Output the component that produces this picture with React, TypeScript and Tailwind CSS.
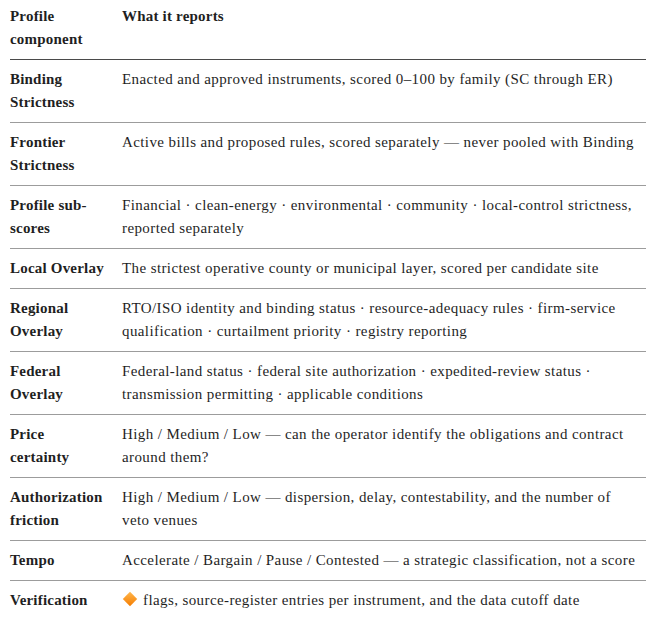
import React from "react"

type Row = {
    label: string
    text: React.ReactNode
}

function Diamond() {
    return (
        <svg width="16" height="16" viewBox="0 0 16 16" className="inline-block align-[-2px] mr-[5px]">
            <defs>
                <linearGradient id="dg" x1="0" y1="0" x2="0" y2="1">
                    <stop offset="0" stopColor="#ffb74d" />
                    <stop offset="1" stopColor="#f57c00" />
                </linearGradient>
            </defs>
            <path d="M8 0.8 L15.2 8 L8 15.2 L0.8 8 Z" fill="url(#dg)" />
        </svg>
    )
}

const rows: Row[] = [
    { label: "Binding Strictness", text: "Enacted and approved instruments, scored 0–100 by family (SC through ER)" },
    { label: "Frontier Strictness", text: "Active bills and proposed rules, scored separately — never pooled with Binding" },
    {
        label: "Profile sub-scores",
        text: "Financial · clean-energy · environmental · community · local-control strictness, reported separately",
    },
    { label: "Local Overlay", text: "The strictest operative county or municipal layer, scored per candidate site" },
    {
        label: "Regional Overlay",
        text: "RTO/ISO identity and binding status · resource-adequacy rules · firm-service qualification · curtailment priority · registry reporting",
    },
    {
        label: "Federal Overlay",
        text: "Federal-land status · federal site authorization · expedited-review status · transmission permitting · applicable conditions",
    },
    {
        label: "Price certainty",
        text: "High / Medium / Low — can the operator identify the obligations and contract around them?",
    },
    {
        label: "Authorization friction",
        text: "High / Medium / Low — dispersion, delay, contestability, and the number of veto venues",
    },
    { label: "Tempo", text: "Accelerate / Bargain / Pause / Contested — a strategic classification, not a score" },
    {
        label: "Verification",
        text: (
            <>
                <Diamond />
                flags, source-register entries per instrument, and the data cutoff date
            </>
        ),
    },
]

export default function App() {
    return (
        <div className="w-[646px] h-[619px] overflow-hidden bg-white pl-[10px] text-[#1f1f1f] text-[15px] leading-[23px] font-[family-name:Liberation_Serif,serif]">
            <table className="w-[636px] border-collapse">
                <thead>
                    <tr className="border-b border-[#4a4a4a]">
                        <th className="w-[112px] pr-[17px] pt-[5px] pb-[8px] text-left align-top font-bold tracking-[0.2px]">
                            Profile component
                        </th>
                        <th className="pt-[5px] pb-[8px] text-left align-top font-bold tracking-[0.2px]">
                            What it reports
                        </th>
                    </tr>
                </thead>
                <tbody>
                    {rows.map((row, i) => (
                        <tr key={row.label} className={i < rows.length - 1 ? "border-b border-[#9c9c9c]" : ""}>
                            <td className="w-[112px] pr-[17px] py-2 align-top font-bold tracking-[0.2px]">
                                {row.label}
                            </td>
                            <td className="py-2 pr-[9px] align-top tracking-[0.4px]">{row.text}</td>
                        </tr>
                    ))}
                </tbody>
            </table>
        </div>
    )
}
